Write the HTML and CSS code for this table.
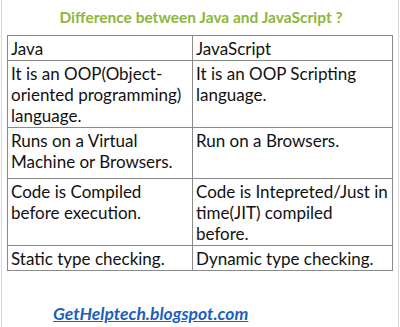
FILE: index.html
```html
<!DOCTYPE html>
<html>
<head>
<meta charset="utf-8">
<link rel="stylesheet" href="styles.css">
</head>
<body>
<div class="frame">
  <h1 class="title">Difference between Java and JavaScript ?</h1>
  <table class="cmp">
    <tr class="r-head"><td>Java</td><td>JavaScript</td></tr>
    <tr class="r1"><td>It is an OOP(Object-oriented programming) language.</td><td>It is an OOP Scripting language.</td></tr>
    <tr class="r2"><td>Runs on a Virtual Machine or Browsers.</td><td>Run on a Browsers.</td></tr>
    <tr class="r3"><td>Code is Compiled before execution.</td><td>Code is Intepreted/Just in time(JIT) compiled before.</td></tr>
    <tr class="r4"><td>Static type checking.</td><td>Dynamic type checking.</td></tr>
  </table>
  <p class="link"><a href="#">GetHelptech.blogspot.com</a></p>
</div>
</body>
</html>
```
FILE: styles.css
```css
html, body {
  margin: 0;
  padding: 0;
  background: #fff;
}
.frame {
  width: 398px;
  height: 327px;
  margin-left: 1px;
  border-left: 1px solid #d8d8d8;
  border-right: 1px solid #d8d8d8;
  box-sizing: border-box;
  padding: 8px 3px 0 5px;
  font-family: Lato, "Open Sans", sans-serif;
  color: #111;
}
.title {
  margin: 0;
  height: 27px;
  text-align: center;
  font-size: 15.5px;
  font-weight: bold;
  color: #8db63c;
  line-height: 18px;
}
.cmp {
  border-collapse: collapse;
  width: 386px;
  table-layout: fixed;
  font-size: 17px;
  line-height: 21px;
}
.cmp td {
  border: 1px solid #8a8a8a;
  padding: 2px 3px 1px 3px;
  vertical-align: top;
}
.cmp td:first-child {
  width: 178px;
}
.r2 td { height: 47px; }
.link {
  margin: 32px 0 0 46px;
  font-size: 17.5px;
  font-weight: bold;
  font-style: italic;
}
.link a {
  color: #1d5fbf;
  text-decoration: underline;
}
```
